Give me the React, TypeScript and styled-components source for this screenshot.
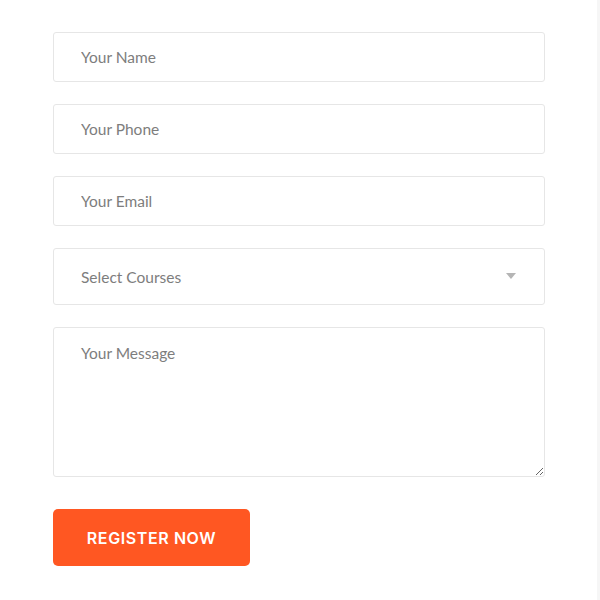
import styled, { createGlobalStyle } from "styled-components";

const GlobalStyle = createGlobalStyle`
  html, body {
    margin: 0;
    padding: 0;
    background: #ffffff;
  }
  * {
    box-sizing: border-box;
  }
`;

export default function App() {
  return (
    <>
      <GlobalStyle />
      <Page>
        <Form onSubmit={(e) => e.preventDefault()}>
          <TextInput type="text" placeholder="Your Name" />
          <TextInput type="tel" placeholder="Your Phone" />
          <TextInput type="email" placeholder="Your Email" />
          <SelectWrap>
            <Select defaultValue="">
              <option value="" disabled>
                Select Courses
              </option>
              <option value="web">Web Development</option>
              <option value="design">UI/UX Design</option>
            </Select>
            <Caret />
          </SelectWrap>
          <MessageArea placeholder="Your Message" />
          <SubmitButton type="submit">Register Now</SubmitButton>
        </Form>
      </Page>
    </>
  );
}

const Page = styled.div`
  width: 600px;
  height: 600px;
  padding: 32px 55px 0 53px;
  border-right: 3px solid #f6f6f6;
`;

const Form = styled.form`
  display: flex;
  flex-direction: column;
  gap: 22px;
  width: 492px;
`;

const fieldBase = `
  width: 100%;
  border: 1px solid #e6e6e6;
  border-radius: 3px;
  background: #ffffff;
  padding: 0 27px;
  font-family: "Lato", "Noto Sans", sans-serif;
  font-size: 15.5px;
  color: #7d7d7d;
  outline: none;

  &::placeholder {
    color: #7d7d7d;
  }
`;

const TextInput = styled.input`
  ${fieldBase}
  height: 50px;
`;

const SelectWrap = styled.div`
  position: relative;
  width: 100%;
`;

const Select = styled.select`
  ${fieldBase}
  height: 57px;
  appearance: none;
  -webkit-appearance: none;
  cursor: pointer;
`;

const Caret = styled.span`
  position: absolute;
  right: 29px;
  top: 25px;
  width: 0;
  height: 0;
  border-left: 5px solid transparent;
  border-right: 5px solid transparent;
  border-top: 6px solid #b5b5b5;
  pointer-events: none;
`;

const MessageArea = styled.textarea`
  ${fieldBase}
  height: 150px;
  padding-top: 15px;
  resize: vertical;
  line-height: 1.4;
`;

const SubmitButton = styled.button`
  margin-top: 10px;
  width: 197px;
  height: 57px;
  border: none;
  border-radius: 5px;
  background: #ff5722;
  color: #ffffff;
  font-family: "Inter", "Lato", sans-serif;
  font-weight: 600;
  font-size: 16px;
  letter-spacing: 0.6px;
  text-transform: uppercase;
  cursor: pointer;
`;
